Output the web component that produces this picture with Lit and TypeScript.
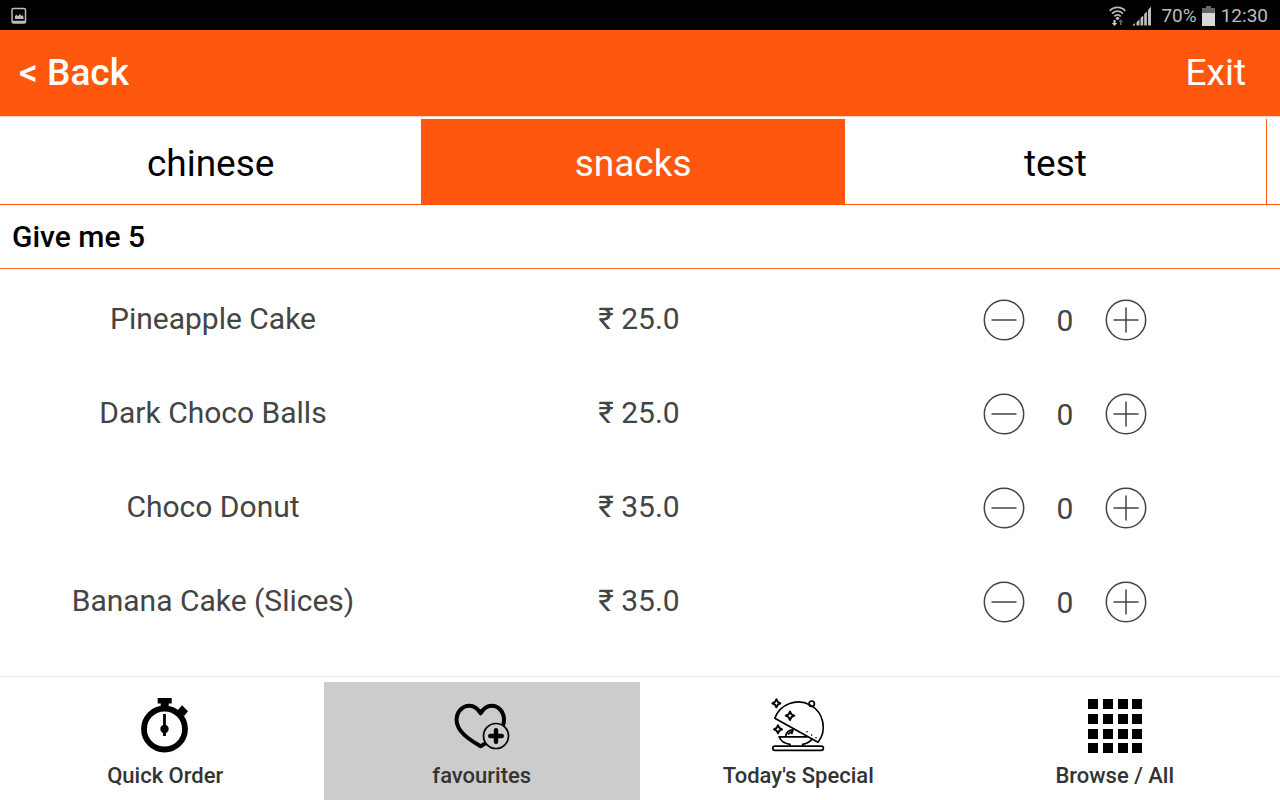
import { LitElement, html, css, svg } from "lit";
import { customElement, state } from "lit/decorators.js";
import { classMap } from "lit/directives/class-map.js";

interface Item {
  name: string;
  price: string;
  qty: number;
}

const star = (x: number, y: number, r: number) => svg`<path
  d="M${x} ${y - r}L${x + 1.4} ${y - 1.4}L${x + r} ${y}L${x + 1.4} ${y + 1.4}L${x} ${y + r}L${x - 1.4} ${y + 1.4}L${x - r} ${y}L${x - 1.4} ${y - 1.4}Z"
  fill="none" stroke="#000" stroke-width="1.9" stroke-linejoin="round"/>`;

const stopwatch = html`<svg class="icon" viewBox="0 0 60 58" aria-hidden="true">
  <circle cx="29.5" cy="33" r="20.5" fill="none" stroke="#000" stroke-width="5.8" />
  <path d="M22.7 2h14v5.4h-3V13h-8V7.4h-3zM47 9.3l6 6-3.9 4.7-6.6-5.5zM28.1 18h2.8v22h-2.8z" />
  <circle cx="29.5" cy="33" r="4.2" />
</svg>`;

const heart = html`<svg class="icon" viewBox="0 0 60 58" aria-hidden="true">
  <path
    d="M28.6 17.3C25.5 12 21.5 9.7 17.6 9.7 10 9.7 4.6 16 4.6 24c0 11.5 12.5 19.5 24 26.3C40 43.5 52 36 52 24c0-8-5.2-14.3-12.4-14.3-4.3 0-8 2.3-11 7.6z"
    fill="none" stroke="#000" stroke-width="4" stroke-linejoin="round" />
  <circle class="badge" cx="44" cy="40" r="12.5" stroke="#000" stroke-width="1.7" />
  <path d="M44 34.2v11.600M38.2 40h11.600" stroke="#000" stroke-width="4.4" stroke-linecap="round" />
</svg>`;

const dish = html`<svg class="icon" viewBox="0 0 60 58" aria-hidden="true">
  <g fill="none" stroke="#000" stroke-width="1.7" stroke-linejoin="round" stroke-linecap="round">
    <path d="M6.8 22.3A25 25 0 1 1 50 46.3z" />
    <circle cx="43.7" cy="7.7" r="2.7" />
    <path d="M11 40.8h28M11.5 41.5c1.500 4 5.500 6 10.500 6.800v1.500M34.700 49.800v-1.500c5-.8 8-3 9.500-5.500M17.800 40c.3-3.200 2.700-6 7.200-6.200M20.500 37.800c1.500-1.500 3.500-1.300 4.300-2.800M24 37.500v-2.500" />
    <rect x="4.8" y="50.1" width="50.6" height="4.2" rx="2.1" />
  </g>
  ${star(8.4, 7.3, 4)}${star(22, 19.7, 4.3)}${star(10, 33.3, 4)}
  <circle cx="39" cy="35.7" r=".8" /><circle cx="43.7" cy="39" r=".8" /><circle cx="48" cy="41.7" r=".8" />
</svg>`;

const cells = [3, 18, 33, 47];
const grid = html`<svg class="icon" viewBox="0 0 60 58" aria-hidden="true" shape-rendering="crispEdges">
  ${cells.map((y) => cells.map((x) => svg`<rect x=${x} y=${y} width="10" height="10"/>`))}
</svg>`;

@customElement("app-root")
export class AppRoot extends LitElement {
  @state() private tab = "snacks";
  @state() private page = "favourites";
  @state() private items: Item[] = [
    { name: "Pineapple Cake", price: "₹ 25.0", qty: 0 },
    { name: "Dark Choco Balls", price: "₹ 25.0", qty: 0 },
    { name: "Choco Donut", price: "₹ 35.0", qty: 0 },
    { name: "Banana Cake (Slices)", price: "₹ 35.0", qty: 0 },
  ];

  static styles = css`
    :host {
      display: flex;
      flex-direction: column;
      height: 100vh;
      overflow: hidden;
      background: #fff;
      color: #000;
      font-family: Roboto, "Noto Sans", sans-serif;
    }
    button {
      margin: 0;
      padding: 0;
      border: 0;
      background: none;
      color: inherit;
      font: inherit;
      cursor: pointer;
    }
    svg {
      display: block;
      flex: none;
    }
    .status {
      display: flex;
      align-items: center;
      flex: none;
      box-sizing: border-box;
      height: 30px;
      padding: 2px 12px 0 11px;
      background: #000;
      color: #bdbdbd;
      font-size: 19px;
      line-height: 28px;
    }
    .status .end {
      display: flex;
      align-items: center;
      margin-left: auto;
    }
    .wifi { margin-right: 6px; }
    .signal { margin-right: 10px; }
    .battery { margin: 0 6px 0 5px; }
    .bar {
      display: flex;
      justify-content: space-between;
      align-items: center;
      flex: none;
      box-sizing: border-box;
      height: 87px;
      padding: 0 34px 2px 19px;
      border-bottom: 1px solid #ffd0ba;
      background: #ff570d;
      background-clip: padding-box;
      color: #fff;
      font-size: 37px;
    }
    .back { font-weight: 500; }
    .tabs {
      display: flex;
      flex: none;
      margin-top: 2px;
      border-bottom: 1px solid #ff570d;
    }
    .tab {
      flex: 0 0 33%;
      box-sizing: border-box;
      height: 85px;
      padding-top: 4px;
      border-right: 1px solid #ff570d;
      font-size: 37px;
    }
    .tab.on {
      background: #ff570d;
      color: #fff;
    }
    h2 {
      flex: none;
      margin: 0;
      padding: 0 12px;
      border-bottom: 1px solid #ff6a2a;
      font-size: 30px;
      font-weight: 500;
      line-height: 63px;
    }
    .list {
      flex: 1;
      min-height: 0;
      padding: 4px 2px 0 0;
      overflow: hidden;
      color: #444;
      font-size: 30px;
    }
    table {
      width: 100%;
      table-layout: fixed;
      border-collapse: collapse;
    }
    td {
      box-sizing: border-box;
      height: 94px;
      padding: 0;
      text-align: center;
      vertical-align: middle;
    }
    .text { padding-bottom: 3px; }
    .stepper {
      display: flex;
      justify-content: center;
      align-items: center;
    }
    output { width: 80px; }
    nav {
      display: grid;
      grid-template-columns: repeat(4, 1fr);
      flex: none;
      padding: 5px 7px 0;
      border-top: 1px solid #e6e6e6;
    }
    .nav {
      display: flex;
      flex-direction: column;
      align-items: center;
      height: 118px;
      box-sizing: border-box;
      padding-top: 14px;
      color: #333;
      font-size: 22px;
      font-weight: 500;
      line-height: 28px;
      gap: 8px;
    }
    .nav.on { background: #ccc; }
    .icon { width: 60px; height: 58px; }
    .badge { fill: #fff; }
    .on .badge { fill: #ccc; }
  `;

  private step(index: number, by: number) {
    this.items = this.items.map((it, i) => (i === index ? { ...it, qty: Math.max(0, it.qty + by) } : it));
  }

  private navItem(label: string, icon: unknown) {
    return html`<button class=${classMap({ nav: true, on: this.page === label })} @click=${() => (this.page = label)}>
      ${icon}<span>${label}</span>
    </button>`;
  }

  render() {
    return html`
      <div class="status">
        <svg width="16" height="18" viewBox="0 0 16 18" aria-hidden="true">
          <rect x="1" y="1.5" width="13.5" height="14.5" rx="1.5" fill="none" stroke="#bdbdbd" stroke-width="1.5" />
          <path d="M1.5 13.8h12.5v2.2H1.500zM4 12V9l1.500-1.200L7 9.300l2-2.300 1.700 2 1-.8L12.500 10v2z" fill="#bdbdbd" />
        </svg>
        <div class="end">
          <svg class="wifi" width="17" height="20" viewBox="0 0 17 20" aria-hidden="true">
            <g fill="none" stroke="#bdbdbd" stroke-width="1.7">
              <path d="M.7 4.8C5 .2 12 .2 16.300 4.800M3 7.600c3-3.200 8-3.200 11 0M5.300 10.300c1.800-1.900 4.600-1.900 6.400 0" />
            </g>
            <circle cx="8.5" cy="12.3" r="1.6" fill="#bdbdbd" />
            <path d="M4.500 14h2v3h1.700l-2.700 3-2.700-3h1.700z" fill="#d0d0d0" />
            <path d="M11 19v-3H9.500l2.300-2.800 2.300 2.800h-1.500v3z" fill="#666" />
          </svg>
          <svg class="signal" width="19" height="20" viewBox="0 0 19 20" aria-hidden="true">
            <path d="M0 19.500l3-2.500v2.500zM4.500 16l3-2.500v6h-3zM8.500 12l2.700-2.500v10H8.500zM12.200 8l2.700-2.500v14h-2.700zM16 4l3-3.500v19h-3z" fill="#bdbdbd" />
          </svg>
          <span>70%</span>
          <svg class="battery" width="13" height="20" viewBox="0 0 13 20" aria-hidden="true">
            <path d="M4 0h5v2h4v5H0V2h4z" fill="#666" />
            <path d="M0 7h13v13H0z" fill="#d8d8d8" />
          </svg>
          <span>12:30</span>
        </div>
      </div>
      <header class="bar">
        <button class="back">&lt; Back</button>
        <button>Exit</button>
      </header>
      <div class="tabs" role="tablist">
        ${["chinese", "snacks", "test"].map(
          (t) => html`<button
            role="tab"
            aria-selected=${this.tab === t}
            class=${classMap({ tab: true, on: this.tab === t })}
            @click=${() => (this.tab = t)}
          >${t}</button>`
        )}
      </div>
      <h2>Give me 5</h2>
      <main class="list">
        <table>
          <tbody>
            ${this.items.map(
              (it, i) => html`<tr>
                <td class="text">${it.name}</td>
                <td class="text">${it.price}</td>
                <td>
                  <div class="stepper">
                    <button aria-label="Remove one ${it.name}" @click=${() => this.step(i, -1)}>
                      <svg width="42" height="42" viewBox="0 0 42 42" fill="none" stroke="#444" stroke-width="1.5">
                        <circle cx="21" cy="21" r="19.7" /><path d="M8.5 21h25" />
                      </svg>
                    </button>
                    <output aria-label="Quantity of ${it.name}">${it.qty}</output>
                    <button aria-label="Add one ${it.name}" @click=${() => this.step(i, 1)}>
                      <svg width="42" height="42" viewBox="0 0 42 42" fill="none" stroke="#444" stroke-width="1.5">
                        <circle cx="21" cy="21" r="19.7" /><path d="M8.5 21h25M21 8.5v25" />
                      </svg>
                    </button>
                  </div>
                </td>
              </tr>`
            )}
          </tbody>
        </table>
      </main>
      <nav>
        ${this.navItem("Quick Order", stopwatch)} ${this.navItem("favourites", heart)}
        ${this.navItem("Today's Special", dish)} ${this.navItem("Browse / All", grid)}
      </nav>
    `;
  }
}
